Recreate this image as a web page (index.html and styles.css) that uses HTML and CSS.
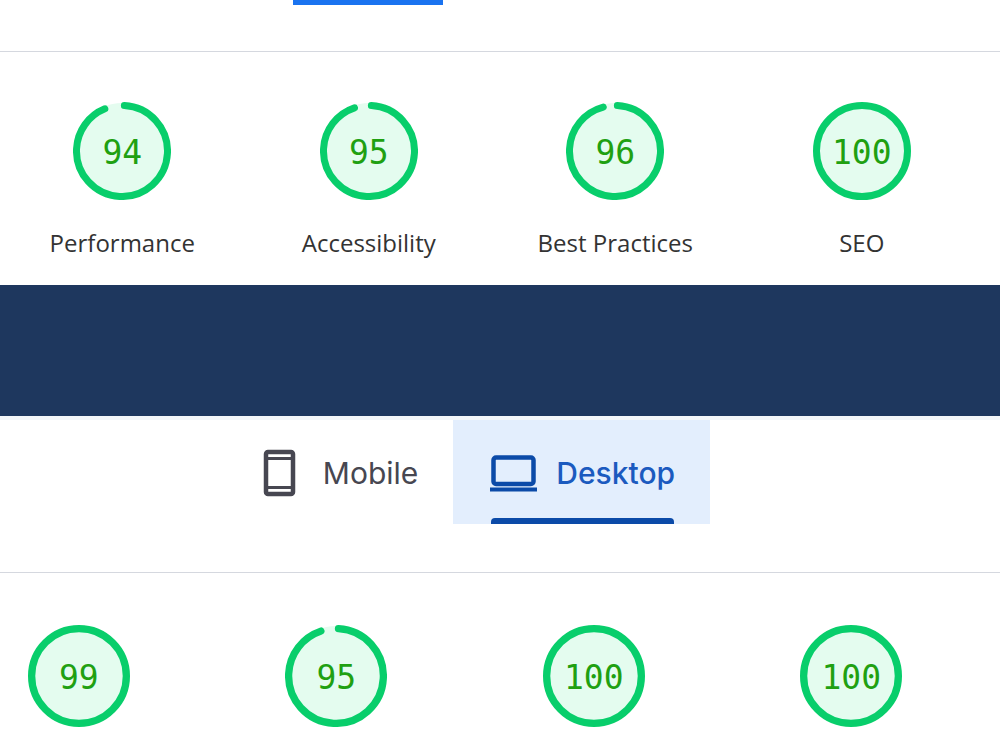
FILE: index.html
```html
<!DOCTYPE html>
<html lang="en">
<head>
    <meta charset="UTF-8">
    <meta name="viewport" content="width=device-width, initial-scale=1.0">
    <title>PageSpeed scores</title>
    <link rel="stylesheet" href="styles.css">
</head>
<body>
    <section class="report mobile-report">
        <div class="tab-edge"><div class="tab-line"></div></div>
        <div class="scores">
            <div class="score">
                <div class="gauge">
                    <svg viewBox="0 0 98 98"><circle class="fill" cx="49" cy="49" r="48"/><circle class="arc" cx="49" cy="49" r="45.500" pathLength="100" stroke-dasharray="93 7" transform="rotate(-87 49 49)"/></svg>
                    <span>94</span>
                </div>
                <p>Performance</p>
            </div>
            <div class="score">
                <div class="gauge">
                    <svg viewBox="0 0 98 98"><circle class="fill" cx="49" cy="49" r="48"/><circle class="arc" cx="49" cy="49" r="45.500" pathLength="100" stroke-dasharray="94 6" transform="rotate(-87 49 49)"/></svg>
                    <span>95</span>
                </div>
                <p>Accessibility</p>
            </div>
            <div class="score">
                <div class="gauge">
                    <svg viewBox="0 0 98 98"><circle class="fill" cx="49" cy="49" r="48"/><circle class="arc" cx="49" cy="49" r="45.500" pathLength="100" stroke-dasharray="95 5" transform="rotate(-87 49 49)"/></svg>
                    <span>96</span>
                </div>
                <p>Best Practices</p>
            </div>
            <div class="score">
                <div class="gauge">
                    <svg viewBox="0 0 98 98"><circle class="fill" cx="49" cy="49" r="48"/><circle class="arc" cx="49" cy="49" r="45.500"/></svg>
                    <span>100</span>
                </div>
                <p>SEO</p>
            </div>
        </div>
    </section>

    <div class="divider"></div>

    <section class="report desktop-report">
        <div class="tabs" role="tablist">
            <button type="button" class="tab" role="tab" aria-selected="false">
                <svg width="34" height="48" viewBox="0 0 34 48">
                    <rect x="3" y="3" width="27" height="42" rx="2" fill="none" stroke="currentColor" stroke-width="4.500"/>
                    <path d="M3 9.500h27M3 38.500h27" stroke="currentColor" stroke-width="3"/>
                </svg>
                Mobile
            </button>
            <button type="button" class="tab active" role="tab" aria-selected="true">
                <svg width="48" height="48" viewBox="0 0 48 48">
                    <rect x="3.500" y="8.500" width="40" height="26.500" rx="2.500" fill="none" stroke="currentColor" stroke-width="4.500"/>
                    <path d="M0 40.500h47" stroke="currentColor" stroke-width="4"/>
                </svg>
                Desktop
            </button>
        </div>
        <div class="scores">
            <div class="score">
                <div class="gauge">
                    <svg viewBox="0 0 98 98"><circle class="fill" cx="49" cy="49" r="48"/><circle class="arc" cx="49" cy="49" r="45.500"/></svg>
                    <span>99</span>
                </div>
            </div>
            <div class="score">
                <div class="gauge">
                    <svg viewBox="0 0 98 98"><circle class="fill" cx="49" cy="49" r="48"/><circle class="arc" cx="49" cy="49" r="45.500" pathLength="100" stroke-dasharray="94 6" transform="rotate(-87 49 49)"/></svg>
                    <span>95</span>
                </div>
            </div>
            <div class="score">
                <div class="gauge">
                    <svg viewBox="0 0 98 98"><circle class="fill" cx="49" cy="49" r="48"/><circle class="arc" cx="49" cy="49" r="45.500"/></svg>
                    <span>100</span>
                </div>
            </div>
            <div class="score">
                <div class="gauge">
                    <svg viewBox="0 0 98 98"><circle class="fill" cx="49" cy="49" r="48"/><circle class="arc" cx="49" cy="49" r="45.500"/></svg>
                    <span>100</span>
                </div>
            </div>
        </div>
    </section>
</body>
</html>
```
FILE: styles.css
```css
body {
    margin: 0;
    background-color: #fff;
    font-family: "Open Sans", "Noto Sans", sans-serif;
    color: #333;
    overflow-x: hidden;
}
.tab-edge {
    height: 51px;
    border-bottom: 1px solid #d5d8df;
}
.tab-line {
    width: 150px;
    height: 5px;
    margin-left: 293px;
    background-color: #1a73f0;
}
.scores {
    display: grid;
    grid-template-columns: repeat(4, 1fr);
}
.mobile-report .scores {
    margin: 0 15px 0 -1px;
    padding: 50px 0 25px;
}
.score {
    display: flex;
    flex-direction: column;
    align-items: center;
}
.score p {
    margin: 26px 0 0;
    font-size: 24px;
    line-height: 34px;
    white-space: nowrap;
}
.gauge {
    display: grid;
    place-items: center;
    width: 98px;
    height: 98px;
}
.gauge svg,
.gauge span {
    grid-area: 1 / 1;
}
.gauge svg {
    width: 100%;
    height: 100%;
}
.gauge span {
    padding-top: 3px;
    font-family: "DejaVu Sans Mono", monospace;
    font-size: 33px;
    line-height: 40px;
    color: #20a011;
}
.fill {
    fill: #e4fcef;
}
.arc {
    fill: none;
    stroke: #08ce6b;
    stroke-width: 7;
    stroke-linecap: round;
}

/* navy band between the two reports */
.divider {
    height: 131px;
    background-color: #1e375e;
}

.desktop-report {
    border-top: 4px solid #f3f6f9;
}
.tabs {
    display: flex;
    justify-content: center;
    padding: 0 64px 48px 0;
    border-bottom: 1px solid #d5d8df;
}
.tab {
    display: flex;
    align-items: center;
    box-sizing: border-box;
    height: 104px;
    padding: 2px 35px 0 37px;
    gap: 26px;
    border: none;
    background: none;
    font-family: Inter, sans-serif;
    font-size: 30px;
    color: #474751;
    cursor: pointer;
}
.tab.active {
    position: relative;
    gap: 18px;
    background-color: #e3eefd;
    font-weight: 500;
    color: #1b5abf;
}
.tab.active svg {
    color: #0b4aa8;
}
.tab.active::after {
    content: "";
    position: absolute;
    left: 38px;
    right: 36px;
    bottom: 0;
    height: 6px;
    border-radius: 4px 4px 0 0;
    background-color: #0b4aa8;
}
.desktop-report .scores {
    margin: 0 20px 0 -50px;
    padding: 52px 0 23px;
}
.desktop-report .gauge {
    width: 102px;
    height: 102px;
}
```
